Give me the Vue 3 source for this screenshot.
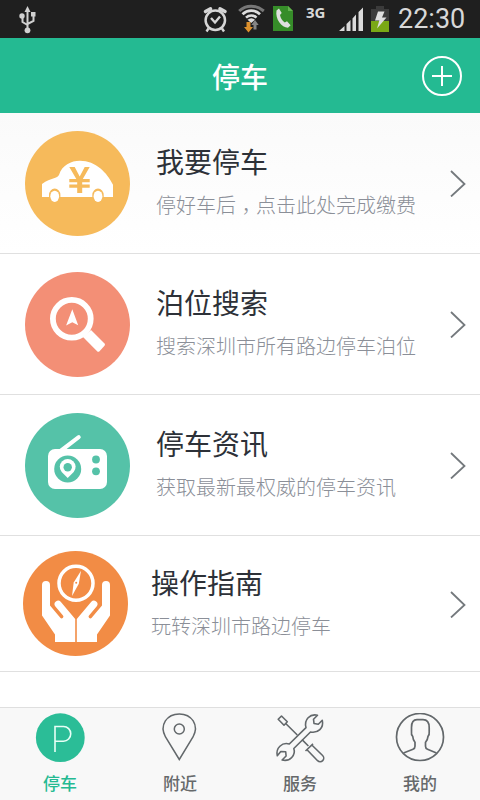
<script setup>
import { ref } from 'vue'

const entries = [
  { id: 'pay', title: '我要停车', parts: ['停好车后', '点击此处完成缴费'] },
  { id: 'search', title: '泊位搜索', parts: ['搜索深圳市所有路边停车泊位'] },
  { id: 'news', title: '停车资讯', parts: ['获取最新最权威的停车资讯'] },
  { id: 'guide', title: '操作指南', parts: ['玩转深圳市路边停车'] }
]

const tabs = [
  { id: 'park', label: '停车' },
  { id: 'near', label: '附近' },
  { id: 'service', label: '服务' },
  { id: 'mine', label: '我的' }
]

const active = ref('park')
</script>

<template>
  <div class="screen">
    <div class="status">
      <svg class="usb" width="18" height="38" viewBox="0 0 18 38" aria-hidden="true">
        <g fill="none" stroke="#d0d0d0" stroke-width="2">
          <path d="M8.500 10V30M8.500 25L3.500 22V16M8.500 24L14.500 21V15" />
        </g>
        <g fill="#d0d0d0">
          <path d="M8.500 6l3 6h-6z" />
          <circle cx="3" cy="16" r="2.700" />
          <path d="M12 12h4.500v4.500H12z" />
          <circle cx="8.500" cy="30.300" r="2.900" />
        </g>
      </svg>

      <div class="indicators">
        <svg width="27" height="38" viewBox="0 0 27 38" aria-hidden="true">
          <g fill="none" stroke="#d6d6d6">
            <circle cx="12.300" cy="20.300" r="9.700" stroke-width="2.500" />
            <path d="M8 18l4 4.500 5-6" stroke-width="2.400" />
            <path d="M2.500 11.500L7.500 8.800M22 11.500l-5-2.700" stroke-width="3.600" stroke-linecap="round" />
            <path d="M5.500 28.500l-2 3M19 28.500l2 3" stroke-width="2.400" />
          </g>
        </svg>
        <svg width="27" height="38" viewBox="0 0 27 38" aria-hidden="true">
          <g fill="none">
            <path d="M1.200 11C8 4.500 18 4.500 25.800 11" stroke="#777" stroke-width="3" />
            <path d="M4.500 14.200C9.500 9.500 17 9.500 22 14.200" stroke="#ddd" stroke-width="2.800" />
            <path d="M8 17.600C11 14.800 15.500 14.800 18.500 17.600" stroke="#ddd" stroke-width="2.600" />
          </g>
          <path d="M9.500 19.800q4-3 7.500 0l-3.800 3.200z" fill="#ddd" />
          <path d="M8.500 22h4v5h2.500l-4.500 5.500-4.500-5.500h2.500z" fill="#dc902d" />
          <path d="M15.500 29.500V25h-2.200l3.700-5 3.700 5h-2.200v4.500z" fill="#858585" />
        </svg>
        <svg width="25" height="38" viewBox="0 0 25 38" aria-hidden="true">
          <path d="M0 6h15l5 5v20H0z" fill="#368d29" />
          <path d="M15 6l5 5h-5z" fill="#62b34e" />
          <path d="M3.500 10.500l2.500-2 2.700 4.500-1.700 2c.6 3 2.200 5.700 4.800 7.400l2.200-1.200 3.600 4-2.600 2.600C8.500 27.500 2 19 3.500 10.500z" fill="#e0e0e0" />
        </svg>
        <span class="network">3G</span>
        <svg width="24" height="38" viewBox="0 0 24 38" aria-hidden="true">
          <path d="M0 31l5.500-5v5zM7.500 31v-7l4-4v11zM13.500 31V18.500l3.500-4V31zM19.500 31V12L24 7.500V31z" fill="#dadada" />
        </svg>
        <svg width="19" height="38" viewBox="0 0 19 38" aria-hidden="true">
          <path d="M5 6h8v3h5v12H0V9h5z" fill="#3b3b3b" />
          <path d="M0 21h18v11H0z" fill="#7aa816" />
          <path d="M7 11.500h6.500L11 17.500h4.500L6 28.500l2.300-8H4z" fill="#dedede" />
        </svg>
        <time class="clock">22:30</time>
      </div>
    </div>

    <header class="header">
      <h1 class="heading">停车</h1>
      <button class="add" type="button" aria-label="添加">
        <svg width="40" height="40" viewBox="0 0 40 40" fill="none" stroke="#fff" stroke-width="2" aria-hidden="true">
          <circle cx="20" cy="20" r="19" />
          <path d="M20 10v20M10 20h20" />
        </svg>
      </button>
    </header>

    <main class="list">
      <a v-for="entry in entries" :key="entry.id" class="row" :class="entry.id" :href="'#' + entry.id">
        <svg v-if="entry.id === 'pay'" class="badge" viewBox="0 0 105 105" aria-hidden="true">
          <circle cx="52.500" cy="52.500" r="52.500" fill="#f6ba5b" />
          <path d="M17 66V53q3-2.500 7-4l7-2.500q2-1 3-2.500C37 34 46 29.700 55 29.700c16 0 27 12 33 24V66z" fill="#fff" />
          <g fill="#f6ba5b">
            <path d="M24 67v-3a5.700 6.500 0 0 1 11.400 0v3zM67.300 67v-3a5.700 6.500 0 0 1 11.400 0v3z" />
            <path d="M44.300 36h5.400l5 9.500 5-9.500h5L57.800 48h6.900v3.300h-7.500v2.200h7.500v3.300h-7.500V62h-5v-5.200h-7.900v-3.300h7.900v-2.200h-7.900V48h7z" />
          </g>
          <ellipse cx="29.700" cy="65.300" rx="4.400" ry="5.600" fill="#fff" />
          <ellipse cx="73" cy="65.300" rx="4.400" ry="5.600" fill="#fff" />
        </svg>

        <svg v-else-if="entry.id === 'search'" class="badge" viewBox="0 0 105 105" aria-hidden="true">
          <circle cx="52.500" cy="52.500" r="52.500" fill="#f38f76" />
          <circle cx="46.800" cy="46.800" r="18.900" fill="none" stroke="#fff" stroke-width="5.800" />
          <path d="M66 58l13.500 13.500q1 1 0 2.200l-5 5.600q-1.200 1-2.400 0L58 65z" fill="#fff" />
          <path d="M47.300 37.300l5.900 16-5.900-3-6.200 3.200z" fill="#fff" />
        </svg>

        <svg v-else-if="entry.id === 'news'" class="badge" viewBox="0 0 105 105" aria-hidden="true">
          <circle cx="52.500" cy="52.500" r="52.500" fill="#55c2a8" />
          <path d="M34 36.500l18.500-14a2 2 0 0 1 2.400 3.300L41 36.500z" fill="#fff" />
          <rect x="23" y="36" width="59" height="40" rx="7" fill="#fff" />
          <g fill="#55c2a8">
            <circle cx="42.700" cy="56" r="13.500" />
            <circle cx="71" cy="46.500" r="3.900" />
            <circle cx="71" cy="58.300" r="3.900" />
          </g>
          <path d="M42.700 65l-6-6a7.900 7.900 0 1 1 12 0z" fill="#fff" />
          <circle cx="42.700" cy="54.300" r="4.200" fill="#55c2a8" />
        </svg>

        <svg v-else class="badge" viewBox="0 0 105 105" aria-hidden="true">
          <circle cx="52.500" cy="52.500" r="52.500" fill="#f28c45" />
          <circle cx="53" cy="32.200" r="17" fill="none" stroke="#fff" stroke-width="3.500" />
          <path d="M58 19.700l-2.200 13L49 45l1.700-13.500z" fill="#fff" />
          <circle cx="53.200" cy="31.700" r="1" fill="#f28c45" />
          <g fill="#fff">
            <path d="M19 34a4 4 0 0 1 8 0v20.500l10.300 12.200a1.700 1.700 0 0 0 2.700-2.200l-7.800-9.200a3.600 3.600 0 0 1 5.500-4.600L52.200 68v23H32v-7.500L19 64.500z" />
            <path transform="translate(106 0) scale(-1 1)" d="M19 34a4 4 0 0 1 8 0v20.500l10.300 12.200a1.700 1.700 0 0 0 2.700-2.200l-7.800-9.200a3.600 3.600 0 0 1 5.500-4.600L52.200 68v23H32v-7.500L19 64.500z" />
          </g>
        </svg>

        <span class="copy">
          <span class="title">{{ entry.title }}</span>
          <span class="note"><template v-for="(part, i) in entry.parts" :key="part"><span v-if="i" class="comma">，</span>{{ part }}</template></span>
        </span>

        <svg class="chevron" width="16" height="28" viewBox="0 0 16 28" aria-hidden="true">
          <path d="M1 2L14.500 15 1 27.500" fill="none" stroke="#74797d" stroke-width="1.800" />
        </svg>
      </a>
    </main>

    <nav class="tabs">
      <a
        v-for="tab in tabs"
        :key="tab.id"
        class="tab"
        :class="{ active: active === tab.id }"
        :href="'#' + tab.id"
        @click="active = tab.id"
      >
        <svg v-if="tab.id === 'park'" width="50" height="50" viewBox="0 0 50 50" aria-hidden="true">
          <circle cx="25.300" cy="24.700" r="24.400" fill="#2bbd97" />
          <path d="M20 39V13.500h8.500a7.200 7.300 0 0 1 0 14.700H20" fill="none" stroke="#e8fff6" stroke-width="1.600" />
        </svg>
        <svg v-else-if="tab.id === 'near'" width="50" height="50" viewBox="0 0 50 50" fill="none" stroke="#63686b" stroke-width="1.500" aria-hidden="true">
          <path d="M24.300 46.500L10.500 24C4 12 12 .9 24.300 .9S44.500 12 38 24z" />
          <circle cx="24.300" cy="16" r="5" />
        </svg>
        <svg v-else-if="tab.id === 'service'" width="50" height="50" viewBox="0 0 50 50" fill="none" stroke="#63686b" stroke-width="1.600" stroke-linejoin="round" aria-hidden="true">
          <path d="M42.500 2.200C35 .5 28.800 6.500 31 14.600L14.300 31C7 29 .5 35 2.300 42.700l3.500-4.200 4.900.2.400 4.300-4 4C15 49 21 42 18.800 35.500L35.500 19C43 20.500 49 15 47.300 7.300l-4 4-4.300-.8-.5-4.300z" />
          <path d="M6.500 3L3.200 6.300 9 12.200l3.300-3.400zM10.700 10.500L22.300 22M27 26.600l6.400 6.400" />
          <path d="M38 30.800L30.500 38M36.800 32l10.800 10.500a3.600 3.600 0 0 1-5 5.200L32 36.700" />
        </svg>
        <svg v-else width="50" height="50" viewBox="0 0 50 50" fill="none" stroke="#63686b" stroke-width="1.700" aria-hidden="true">
          <circle cx="25" cy="24" r="23.500" />
          <path d="M8.500 40l9.500-3.700q2-.8 2-3v-4q-2-2-2.300-6-1.700-1.500-1.200-5V14.500C16.500 9 19 6.700 22 6.700h6c3.500 0 6.200 2.500 6.200 8v4q.4 3-1.200 4.600-.4 4-2.500 6v4q0 2.200 2 3L41.500 40" />
        </svg>
        <span class="label">{{ tab.label }}</span>
      </a>
    </nav>
  </div>
</template>

<style>
body {
  margin: 0;
}
</style>

<style scoped>
.screen {
  display: flex;
  flex-direction: column;
  min-height: 100vh;
  background: #fff;
  font-family: "Noto Sans CJK SC", sans-serif;
}

svg {
  display: block;
  flex: none;
}

a {
  color: inherit;
  text-decoration: none;
}

.status {
  display: flex;
  justify-content: space-between;
  height: 38px;
  padding: 0 16px 0 19px;
  background: #1f1f1f;
  color: #d8d8d8;
}

.indicators {
  display: flex;
  gap: 8px;
}

.network {
  width: 25px;
  padding-top: 3px;
  font: 700 15px/18px "Noto Sans", sans-serif;
}

.clock {
  width: 66px;
  font: 400 27px/39px Roboto, sans-serif;
  white-space: nowrap;
}

.header {
  display: grid;
  grid-template-columns: 1fr auto 1fr;
  align-items: center;
  height: 75px;
  padding: 0 18px;
  background: #24ba92;
  color: #fff;
}

.heading {
  grid-column: 2;
  margin: 0;
  font-size: 28px;
  line-height: 40px;
  font-weight: 500;
}

.add {
  justify-self: end;
  padding: 0;
  border: 0;
  background: none;
}

.list {
  flex: 1;
}

.row {
  display: flex;
  align-items: center;
  height: 140px;
  padding: 0 14px 0 25px;
  border-bottom: 1px solid #e0e0e0;
}

.row.pay {
  background: linear-gradient(#fafafa, #fff);
}

.row.guide {
  height: 135px;
  padding-left: 23px;
}

.badge {
  width: 105px;
  height: 105px;
}

.copy {
  display: flex;
  flex: 1;
  flex-direction: column;
  padding-left: 26px;
}

.guide .copy {
  padding-left: 23px;
}

.title {
  color: #2d3138;
  font-size: 28px;
  line-height: 44px;
}

.note {
  color: #8b8f98;
  font-size: 20px;
  line-height: 44px;
  font-weight: 300;
  white-space: nowrap;
}

.comma {
  font-family: "Noto Sans CJK TC", sans-serif;
  line-height: 20px;
  vertical-align: -6px;
}

.tabs {
  display: grid;
  grid-template-columns: repeat(4, 1fr);
  border-top: 1px solid #dfdfdf;
  background: #f8f8f8;
}

.tab {
  display: flex;
  flex-direction: column;
  align-items: center;
  gap: 10px;
  padding: 5px 0 7px;
  color: #66696b;
}

.tab.active {
  color: #24ba92;
}

.label {
  font-size: 17px;
  line-height: 20px;
  font-weight: 500;
}
</style>
